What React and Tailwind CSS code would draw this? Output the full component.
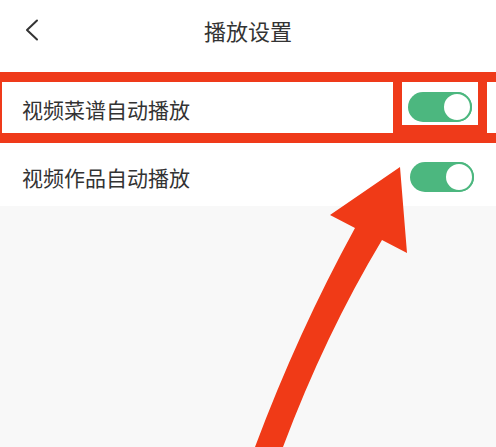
// Interruptor verde (siempre encendido en la captura)
function Interruptor() {
  return (
    <div className="flex h-[30px] w-[64px] items-center justify-end rounded-full bg-[#4cb77f]">
      <div className="h-[30px] w-[30px] rounded-full border-[2px] border-[#4cb77f] bg-white" />
    </div>
  );
}

export default function App() {
  return (
    <div
      className="relative h-[447px] w-[496px] overflow-hidden bg-[#f8f8f8] text-[#333]"
      style={{ fontFamily: '"Noto Sans CJK SC", "Noto Sans", sans-serif' }}
    >
      {/* Encabezado */}
      <div className="flex h-[72px] items-center bg-white pb-[12px]">
        <div className="flex w-[60px] justify-start pl-[24px]">
          <svg width="16" height="22" viewBox="0 0 16 22" fill="none">
            <polyline points="13,1.5 3,11 13,20.5" stroke="#333" strokeWidth="2" strokeLinecap="round" strokeLinejoin="round" />
          </svg>
        </div>
        <h1 className="flex-1 text-center text-[22px] leading-none text-[#333]">播放设置</h1>
        <div className="w-[60px]" />
      </div>

      {/* Fila 1 con marco rojo */}
      <div className="flex h-[71px] border-y-[10px] border-l-[2px] border-[#ef3a1a] bg-white">
        <div className="flex flex-1 items-center pl-[20px] pt-[4px] text-[21px]">视频菜谱自动播放</div>
        <div className="flex w-[94px] justify-center border-x-[9px] border-b-[8px] border-[#ef3a1a] pt-[10px]">
          <Interruptor />
        </div>
        <div className="w-[9px]" />
      </div>

      {/* Fila 2 */}
      <div className="flex h-[63px] items-center justify-between bg-white pl-[22px] pr-[22px]">
        <span className="pt-[6px] text-[21px]">视频作品自动播放</span>
        <div className="pt-[4px]">
          <Interruptor />
        </div>
      </div>

      {/* Flecha roja de anotación */}
      <svg className="absolute left-0 top-0" width="496" height="447" viewBox="0 0 496 447">
        <path
          d="M400 167 L407 253 L382 240 Q325 335 283 447 L255 447 Q298 332 355 228 L330 215 Z"
          fill="#f03a17"
        />
      </svg>
    </div>
  );
}
